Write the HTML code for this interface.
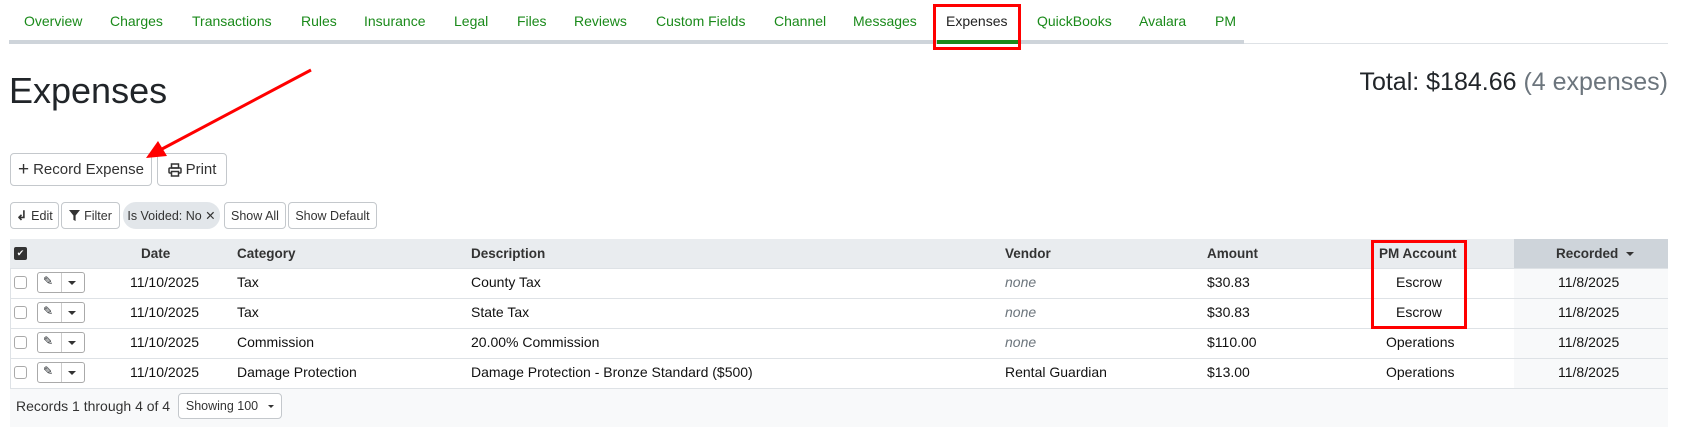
<!DOCTYPE html>
<html><head><meta charset="utf-8"><style>
*{box-sizing:border-box;margin:0;padding:0}
body{width:1683px;height:439px;background:#fff;font-family:"Liberation Sans",Arial,sans-serif;color:#212529;position:relative;overflow:hidden}
.a{position:absolute;white-space:nowrap}
.nav{top:13px;font-size:14px;color:#1a8a1a}
.btn{position:absolute;border:1px solid #c4c8cc;border-radius:4px;background:#fff;font-size:15px;color:#333;display:flex;align-items:center;justify-content:center;gap:4px}
.sb{font-size:12.5px;height:27px;top:202px}
.th{font-size:13.5px;font-weight:bold;color:#333;top:246px}
.td{font-size:14px;color:#111}
.cb{position:absolute;left:14px;width:13px;height:13px;border:1px solid #aaa;border-radius:3px;background:#fff}
.eb{position:absolute;left:37px;width:48px;height:21px;border:1px solid #aaa;border-radius:3px;background:#fff}
.eb:after{content:"";position:absolute;left:23px;top:0;bottom:0;border-left:1px solid #ccc}
.car{position:absolute;left:30px;top:8px;border-left:4px solid transparent;border-right:4px solid transparent;border-top:4px solid #333}
.hl{position:absolute;left:10px;width:1658px;height:1px;background:#dee2e6}
</style></head><body>
<div class="a nav" style="left:24px">Overview</div>
<div class="a nav" style="left:110px">Charges</div>
<div class="a nav" style="left:192px">Transactions</div>
<div class="a nav" style="left:301px">Rules</div>
<div class="a nav" style="left:364px">Insurance</div>
<div class="a nav" style="left:454px">Legal</div>
<div class="a nav" style="left:517px">Files</div>
<div class="a nav" style="left:574px">Reviews</div>
<div class="a nav" style="left:656px">Custom Fields</div>
<div class="a nav" style="left:774px">Channel</div>
<div class="a nav" style="left:853px">Messages</div>
<div class="a nav" style="left:946px;color:#222">Expenses</div>
<div class="a nav" style="left:1037px">QuickBooks</div>
<div class="a nav" style="left:1139px">Avalara</div>
<div class="a nav" style="left:1215px">PM</div>
<div class="a" style="left:9px;top:40px;width:1235px;height:4px;background:#ced4da"></div>
<div class="a" style="left:1244px;top:43px;width:424px;height:1px;background:#dee2e6"></div>
<div class="a" style="left:937px;top:40px;width:82px;height:4px;background:#1a8a1a"></div>
<div class="a" style="left:933px;top:4px;width:88px;height:46px;border:3px solid #f00"></div>

<div class="a" style="left:9px;top:70px;font-size:36px;color:#212529">Expenses</div>
<div class="a" style="right:15px;top:68px;font-size:25px;color:#212529">Total: $184.66 <span style="color:#6c757d">(4 expenses)</span></div>

<div class="btn" style="left:10px;top:153px;width:142px;height:33px"><span style="font-size:19px;line-height:1">+</span>Record Expense</div>
<div class="btn" style="left:157px;top:153px;width:70px;height:33px"><svg width="14" height="14" viewBox="0 0 14 14" fill="none" stroke="#333" stroke-width="1.5"><rect x="3.5" y="1" width="7" height="4"/><rect x="1" y="5" width="12" height="5" rx="1"/><rect x="3.5" y="8.5" width="7" height="4.5" fill="#fff"/></svg>Print</div>

<div class="btn sb" style="left:10px;width:49px"><b style="font-size:13px">↲</b>Edit</div>
<div class="btn sb" style="left:61px;width:59px"><svg width="11" height="11" viewBox="0 0 10 10"><path d="M0 0H10L6 5V10L4 9V5Z" fill="#333"/></svg>Filter</div>
<div class="btn sb" style="left:123px;width:97px;background:#e2e6ea;border-color:#e2e6ea;border-radius:13px">Is Voided: No ✕</div>
<div class="btn sb" style="left:224px;width:62px">Show All</div>
<div class="btn sb" style="left:288px;width:89px">Show Default</div>

<svg class="a" style="left:0;top:0" width="400" height="200"><line x1="311" y1="70" x2="162" y2="149" stroke="#f00" stroke-width="3"/><path d="M146 158 L158 141 L167 156 Z" fill="#f00"/></svg>

<div class="a" style="left:10px;top:239px;width:1658px;height:188px;border:1px solid #dee2e6;border-radius:3px"></div>
<div class="a" style="left:10px;top:239px;width:1658px;height:29px;background:#e9ecef"></div>
<div class="a" style="left:1514px;top:239px;width:154px;height:29px;background:#ced4da"></div>
<div class="a" style="left:1514px;top:268px;width:154px;height:120px;background:#f8f9fa"></div>
<div class="a" style="left:10px;top:388px;width:1658px;height:39px;background:#f8f9fa"></div>
<div class="hl" style="top:268px"></div><div class="hl" style="top:298px"></div><div class="hl" style="top:328px"></div><div class="hl" style="top:358px"></div><div class="hl" style="top:388px"></div>
<div class="a" style="left:14px;top:247px;width:13px;height:13px;background:#333;border-radius:2px;color:#fff;font-size:9px;text-align:center;line-height:13px">✔</div>
<div class="a th" style="left:141px">Date</div>
<div class="a th" style="left:237px">Category</div>
<div class="a th" style="left:471px">Description</div>
<div class="a th" style="left:1005px">Vendor</div>
<div class="a th" style="left:1207px">Amount</div>
<div class="a th" style="left:1379px">PM Account</div>
<div class="a th" style="left:1556px">Recorded <span style="display:inline-block;border-left:4px solid transparent;border-right:4px solid transparent;border-top:4px solid #333;vertical-align:middle;margin-left:4px"></span></div>

<div class="a" style="left:0;top:268px;width:1683px">
<div style="position:relative;height:30px"><div class="cb" style="top:8px"></div><div class="eb" style="top:4px"><span style="position:absolute;left:5px;top:1px;font-size:12px">✎</span><div class="car"></div></div>
<div class="a td" style="left:130px;top:6px">11/10/2025</div><div class="a td" style="left:237px;top:6px">Tax</div><div class="a td" style="left:471px;top:6px">County Tax</div><div class="a td" style="left:1005px;top:6px;color:#6c757d;font-style:italic">none</div><div class="a td" style="left:1207px;top:6px">$30.83</div><div class="a td" style="left:1396px;top:6px">Escrow</div><div class="a td" style="left:1558px;top:6px">11/8/2025</div></div>
<div style="position:relative;height:30px"><div class="cb" style="top:8px"></div><div class="eb" style="top:4px"><span style="position:absolute;left:5px;top:1px;font-size:12px">✎</span><div class="car"></div></div>
<div class="a td" style="left:130px;top:6px">11/10/2025</div><div class="a td" style="left:237px;top:6px">Tax</div><div class="a td" style="left:471px;top:6px">State Tax</div><div class="a td" style="left:1005px;top:6px;color:#6c757d;font-style:italic">none</div><div class="a td" style="left:1207px;top:6px">$30.83</div><div class="a td" style="left:1396px;top:6px">Escrow</div><div class="a td" style="left:1558px;top:6px">11/8/2025</div></div>
<div style="position:relative;height:30px"><div class="cb" style="top:8px"></div><div class="eb" style="top:4px"><span style="position:absolute;left:5px;top:1px;font-size:12px">✎</span><div class="car"></div></div>
<div class="a td" style="left:130px;top:6px">11/10/2025</div><div class="a td" style="left:237px;top:6px">Commission</div><div class="a td" style="left:471px;top:6px">20.00% Commission</div><div class="a td" style="left:1005px;top:6px;color:#6c757d;font-style:italic">none</div><div class="a td" style="left:1207px;top:6px">$110.00</div><div class="a td" style="left:1386px;top:6px">Operations</div><div class="a td" style="left:1558px;top:6px">11/8/2025</div></div>
<div style="position:relative;height:30px"><div class="cb" style="top:8px"></div><div class="eb" style="top:4px"><span style="position:absolute;left:5px;top:1px;font-size:12px">✎</span><div class="car"></div></div>
<div class="a td" style="left:130px;top:6px">11/10/2025</div><div class="a td" style="left:237px;top:6px">Damage Protection</div><div class="a td" style="left:471px;top:6px">Damage Protection - Bronze Standard ($500)</div><div class="a td" style="left:1005px;top:6px">Rental Guardian</div><div class="a td" style="left:1207px;top:6px">$13.00</div><div class="a td" style="left:1386px;top:6px">Operations</div><div class="a td" style="left:1558px;top:6px">11/8/2025</div></div>
</div>
<div class="a" style="left:1371px;top:240px;width:96px;height:89px;border:3px solid #f00"></div>

<div class="a" style="left:16px;top:398px;font-size:14px;color:#333">Records 1 through 4 of 4</div>
<div class="btn" style="left:178px;top:393px;width:104px;height:26px;font-size:12.5px;gap:10px">Showing 100 <span style="display:inline-block;border-left:3px solid transparent;border-right:3px solid transparent;border-top:3px solid #333"></span></div>
</body></html>
